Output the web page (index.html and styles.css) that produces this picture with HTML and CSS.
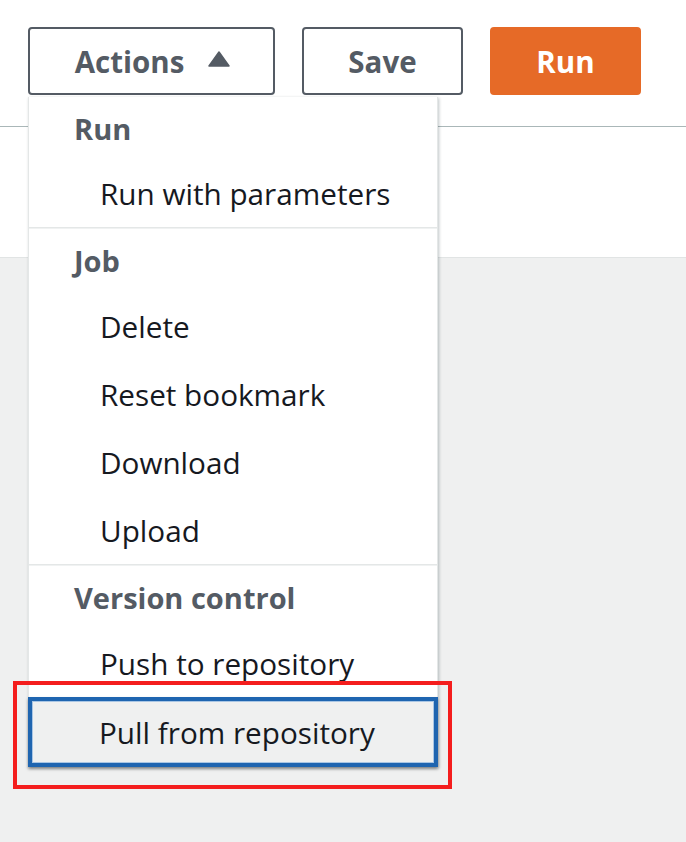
FILE: index.html
```html
<!DOCTYPE html>
<html>
<head>
<meta charset="utf-8">
<link rel="stylesheet" href="styles.css">
</head>
<body>
<div class="page">
  <header class="topbar">
    <button class="btn btn-normal btn-actions">Actions
      <svg class="caret" width="22" height="16" viewBox="0 0 22 16"><path d="M11 1 L21 15 L1 15 Z" fill="#545b64" stroke="#545b64" stroke-width="1.5" stroke-linejoin="round"/></svg>
    </button>
    <button class="btn btn-normal btn-save">Save</button>
    <button class="btn btn-primary">Run</button>
  </header>
  <section class="white-area"></section>
  <section class="gray-area"></section>

  <div class="menu">
    <div class="group">
      <div class="group-title">Run</div>
      <div class="item">Run with parameters</div>
    </div>
    <div class="group">
      <div class="group-title">Job</div>
      <div class="item">Delete</div>
      <div class="item">Reset bookmark</div>
      <div class="item">Download</div>
      <div class="item">Upload</div>
    </div>
    <div class="group">
      <div class="group-title">Version control</div>
      <div class="item">Push to repository</div>
      <div class="item item-active">Pull from repository</div>
    </div>
  </div>
  <div class="annotation"></div>
</div>
</body>
</html>
```

FILE: styles.css
```css
* { box-sizing: border-box; }
html, body { margin: 0; padding: 0; }
body {
  font-family: "Open Sans", "Noto Sans", sans-serif;
  background: #f2f3f3;
  width: 686px;
  height: 842px;
  overflow: hidden;
}
.page {
  position: relative;
  width: 686px;
  height: 842px;
  display: flex;
  flex-direction: column;
}
.topbar {
  height: 127px;
  background: #fff;
  border-bottom: 1px solid #aab7b8;
  display: flex;
  align-items: flex-start;
  padding: 27px 0 0 28px;
  gap: 27px;
}
.btn {
  height: 68px;
  border-radius: 4px;
  font-family: inherit;
  font-weight: 700;
  font-size: 29.5px;
  display: flex;
  align-items: center;
  justify-content: center;
  padding: 0;
  letter-spacing: 0;
}
.btn-normal {
  background: #fff;
  border: 2px solid #545b64;
  color: #545b64;
}
.btn-actions { width: 247px; gap: 24px; padding-left: 2px; }
.btn-save { width: 161px; }
.btn-primary {
  width: 151px;
  background: #e66a27;
  border: 2px solid #e66a27;
  color: #fff;
}
.caret { display: block; margin-top: -4px; }
.white-area {
  height: 131px;
  background: #fff;
  border-bottom: 1px solid #e1e4e4;
}
.gray-area { flex: 1; background: #eff0f0; }

.menu {
  position: absolute;
  left: 28px;
  top: 97px;
  width: 410px;
  background: #fff;
  border: 1px solid #e4e7e7;
  border-top: none;
  box-shadow: 1px 1px 3px rgba(0,28,36,0.25);
  display: flex;
  flex-direction: column;
}
.group { border-top: 1px solid #e4e7e7; box-shadow: inset 0 1px 0 #f0f2f2; }
.group:first-child { border-top: none; box-shadow: none; }
.group-title {
  height: 64px;
  display: flex;
  align-items: center;
  padding-left: 45px;
  font-weight: 700;
  font-size: 29px;
  color: #545b64;
}
.group:first-child .group-title { height: 62px; }
.item {
  height: 68px;
  display: flex;
  align-items: center;
  padding-left: 71px;
  font-size: 29.7px;
  color: #16191f;
}
.item-active {
  background: #eff0f0;
  border: 4px solid #1f65b0;
  box-shadow: inset 0 0 0 1px #a9c6e4, 0 2px 3px rgba(0,0,0,0.35);
  padding-left: 67px;
  margin: 0 -1px -1px -1px;
  height: 70px;
}
.annotation {
  position: absolute;
  left: 13px;
  top: 681px;
  width: 439px;
  height: 108px;
  border: 4px solid #f41d1d;
}
```
